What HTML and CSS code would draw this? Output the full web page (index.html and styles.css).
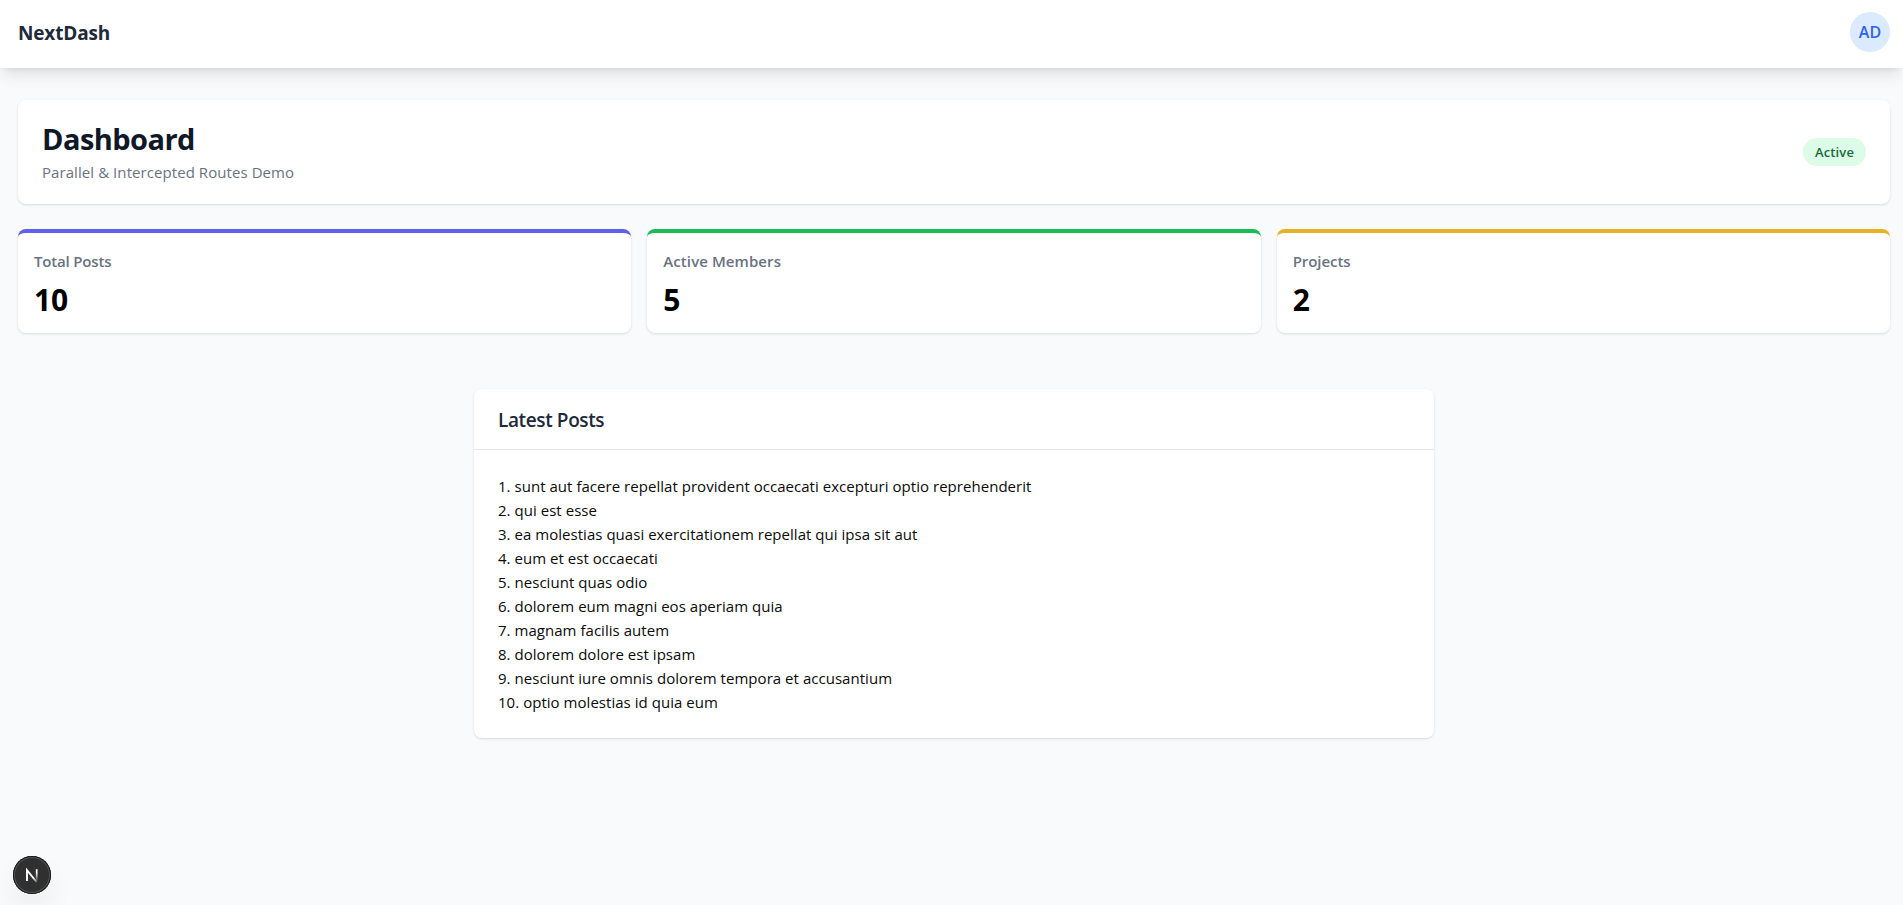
FILE: index.html
```html
<!DOCTYPE html>
<html lang="en">
<head>
<meta charset="utf-8">
<title>NextDash</title>
<link rel="stylesheet" href="styles.css">
</head>
<body>
<header class="topbar">
  <span class="brand">NextDash</span>
  <span class="avatar">AD</span>
</header>
<main class="content">
  <section class="hero card">
    <div>
      <h1 class="title">Dashboard</h1>
      <p class="subtitle">Parallel &amp; Intercepted Routes Demo</p>
    </div>
    <span class="badge">Active</span>
  </section>
  <section class="stats">
    <div class="stat stat-indigo card"><p class="label label-tight">Total Posts</p><p class="value">10</p></div>
    <div class="stat stat-green card"><p class="label label-wide">Active Members</p><p class="value">5</p></div>
    <div class="stat stat-yellow card"><p class="label">Projects</p><p class="value">2</p></div>
  </section>
  <section class="posts card">
    <h2 class="posts-title">Latest Posts</h2>
    <ul class="post-list">
      <li>1. sunt aut facere repellat provident occaecati excepturi optio reprehenderit</li>
      <li>2. qui est esse</li>
      <li>3. ea molestias quasi exercitationem repellat qui ipsa sit aut</li>
      <li>4. eum et est occaecati</li>
      <li>5. nesciunt quas odio</li>
      <li>6. dolorem eum magni eos aperiam quia</li>
      <li>7. magnam facilis autem</li>
      <li>8. dolorem dolore est ipsam</li>
      <li>9. nesciunt iure omnis dolorem tempora et accusantium</li>
      <li>10. optio molestias id quia eum</li>
    </ul>
  </section>
</main>
<div class="dev-button">
  <svg width="38" height="38" viewBox="0 0 38 38" fill="none">
    <defs>
      <linearGradient id="fade" x1="0" y1="13" x2="0" y2="25" gradientUnits="userSpaceOnUse"><stop offset=".3" stop-color="#fff"/><stop offset="1" stop-color="#fff" stop-opacity=".1"/></linearGradient>
      <linearGradient id="diag" x1="19" y1="19" x2="25" y2="26" gradientUnits="userSpaceOnUse"><stop offset=".3" stop-color="#fff"/><stop offset="1" stop-color="#fff" stop-opacity=".2"/></linearGradient>
    </defs>
    <path d="M14 25V14.2L23.6 26" stroke="url(#diag)" stroke-width="1.9"/>
    <path d="M23.7 13.2V24.5" stroke="url(#fade)" stroke-width="1.7"/>
  </svg>
</div>
</body>
</html>
```
FILE: styles.css
```css
* { box-sizing: border-box; margin: 0; padding: 0; }
body {
  min-height: 905px;
  background: #f9fafc;
  color: #0a0a0a;
  font-family: "Open Sans", "Noto Sans", sans-serif;
  font-size: 15px;
  line-height: 24px;
  overflow: hidden;
}
.topbar {
  display: flex;
  align-items: center;
  justify-content: space-between;
  height: 68px;
  padding: 0 13px 4px 18px;
  background: #fff;
  box-shadow: 0 10px 15px -3px rgba(0,0,0,.1), 0 4px 6px -4px rgba(0,0,0,.1);
}
.brand { color: #1e2939; font-size: 19px; font-weight: 700; line-height: 28px; letter-spacing: -.15px; padding-top: 2px; }
.avatar {
  display: flex;
  align-items: center;
  justify-content: center;
  width: 40px;
  height: 40px;
  border-radius: 50%;
  background: #dbeafe;
  color: #2f62ea;
  font-size: 16px;
  font-weight: 600;
}
.content { padding: 32px 13px 0 18px; }
.card { background: #fff; border-radius: 8px; box-shadow: 0 1px 3px rgba(0,0,0,.1), 0 1px 2px -1px rgba(0,0,0,.1); }
.hero { display: flex; align-items: center; justify-content: space-between; height: 104px; padding: 0 24px; }
.title { color: #101828; font-size: 29px; font-weight: 700; line-height: 36px; letter-spacing: -.55px; padding-top: 1px; }
.subtitle { color: #6a7282; margin-top: 3px; letter-spacing: .07px; }
.badge { padding: 4px 12px; border-radius: 14px; background: #dcfce7; color: #166b3a; font-size: 13px; font-weight: 600; line-height: 20px; letter-spacing: .12px; }
.stats { display: grid; grid-template-columns: repeat(3, 1fr); gap: 16px; margin-top: 25px; }
.stat { height: 104px; padding: 16px; border-top: 4px solid; }
.stat-indigo { border-color: #625fe8; }
.stat-green { border-color: #18bd59; }
.stat-yellow { border-color: #e6b122; }
.label { color: #6a7282; font-weight: 600; letter-spacing: -.05px; }
.label-tight { letter-spacing: -.18px; }
.label-wide { letter-spacing: .08px; }
.value { color: #000; font-size: 30px; font-weight: 700; line-height: 36px; margin-top: 9px; letter-spacing: -.2px; }
.posts { width: 960px; height: 349px; margin: 56px auto 0; }
.posts-title { height: 61px; padding: 17px 24px 15px; border-bottom: 1px solid #e5e7eb; color: #1e2939; font-size: 19px; font-weight: 600; line-height: 28px; letter-spacing: -.38px; }
.post-list { padding: 24px; list-style: none; letter-spacing: .035px; }
.dev-button {
  position: fixed;
  left: 13px;
  top: 856px;
  width: 38px;
  height: 38px;
  border-radius: 50%;
  background: #303030;
  box-shadow: 0 0 0 1px #171717 inset, 0 0 0 2px #555 inset, 0 16px 32px -8px rgba(0,0,0,.16);
}
.dev-button svg { display: block; }
```
